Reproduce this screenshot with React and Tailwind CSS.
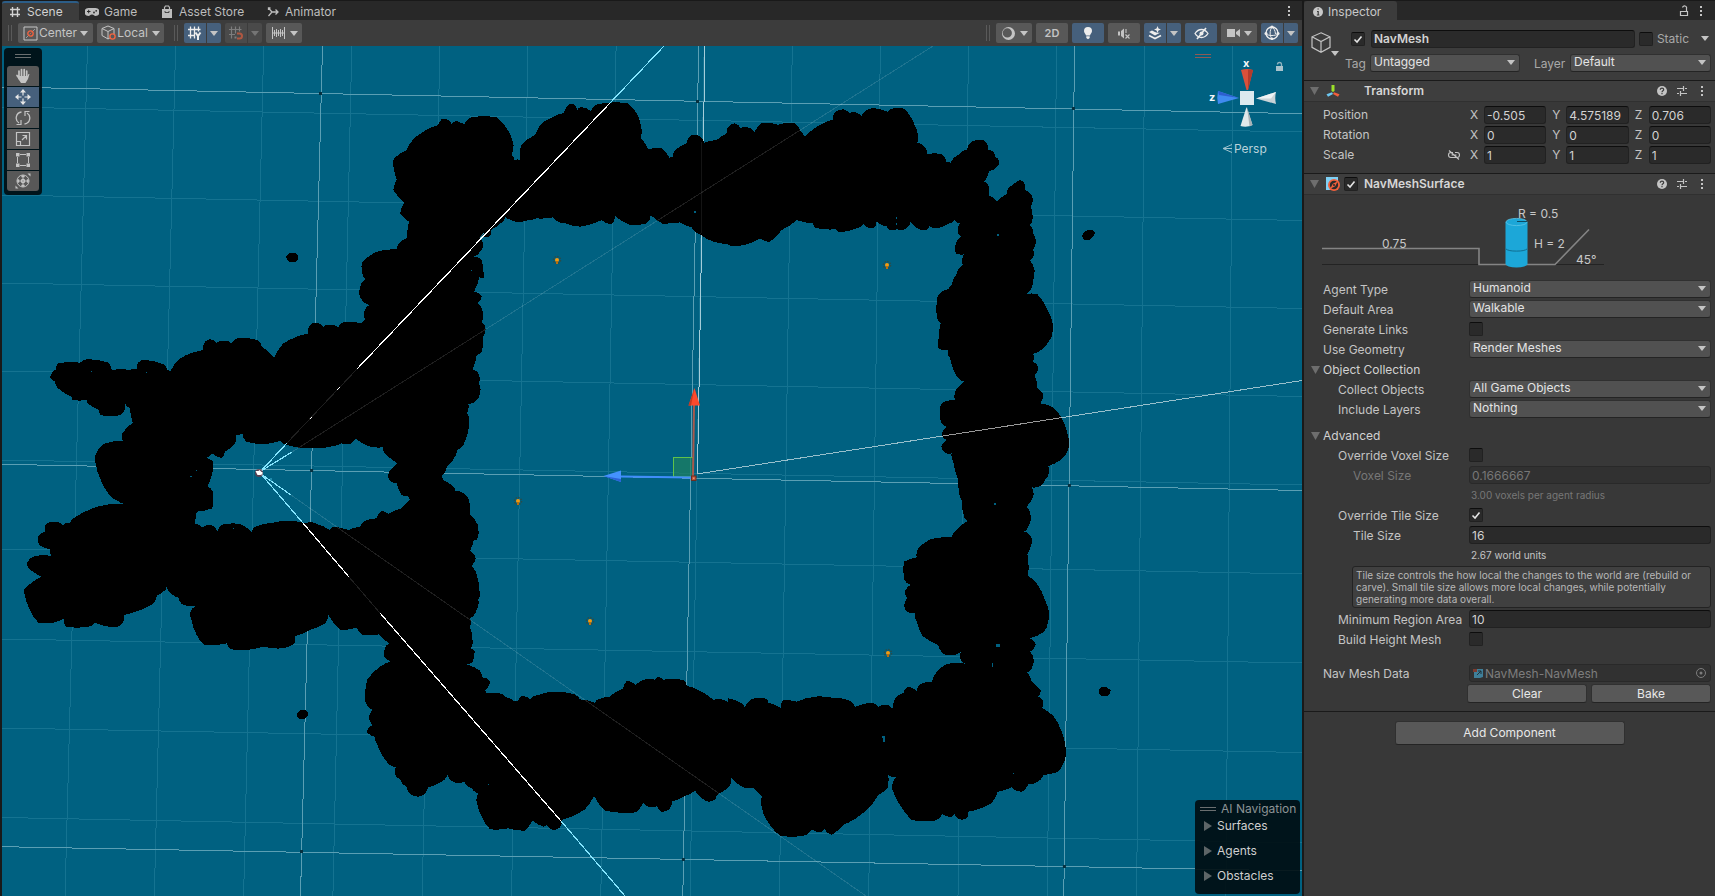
import React from "react";

/* ---------- Terrain outlines ---------- */
/* Each section: origin x, origin y, then points in thirds of a unit from that origin. */

const OUTER = [
  [340, 90, "162,205 200,180 218,150 250,125 295,105 305,88 328,92 335,104 345,94 362,98 372,104 395,82 470,82 500,115 517,150 518,180 514,195 524,210 541,210 543,165 585,135 605,100 672,68 690,42 700,42 712,60 722,52 752,64 775,42 865,40 890,70 904,110 903,145 925,178 965,174 988,203 1000,203 1005,180 1040,160 1055,135 1078,138 1092,158 1130,150 1160,130"],
  [700, 90, "85,110 105,100 122,114 150,114 163,126 185,98 235,104 280,98 300,120 313,140 340,118 400,88 403,70 430,58 448,70 470,68 485,80 500,60 530,56 562,65 590,54 615,58 640,95 655,140 650,160 668,164 682,192 725,192 740,218 752,218 775,195 802,178 810,160 835,150 855,153 865,180 880,185 884,200 898,213 890,232 868,242 853,275 865,285 867,318 890,334 920,312 925,295 960,270 972,278 974,300 997,320 993,350 998,385 990,405 1000,430 1007,460 998,480 1003,495 990,510 1004,540 998,575 988,605 976,612 1012,612 1040,655 1058,700 1055,740 1030,775 1000,792 998,815 1015,830 1004,855 1012,895 1030,915 1020,940 1060,952 1085,985 1105,1040 1105,1080 1085,1108 1045,1128 1045,1155 1035,1170"],
  [700, 480, "1020,18 995,22 1000,50 980,80 992,108 985,140 972,155 990,165 995,190 982,222 984,288 1010,310 1035,360 1048,400 1042,435 1025,460 990,475 1007,492 990,515 1000,535 995,565 980,578 995,605 1022,632 1015,650 1028,662 1027,684 1060,708 1085,755 1097,805 1095,840 1075,875 1030,885 1010,907 985,912 965,935 935,922 893,935 875,970 805,995 800,1015 780,1018 762,1000 757,1010 727,1002 705,1022 635,1020 600,975 580,935 578,910 592,890 565,886 563,925 535,945 500,990 430,1035 395,1065 373,1045 365,1056 335,1048 312,1067 240,1067 210,1035 190,1000 183,960 187,950 160,922 130,922 92,893 88,920 50,945 45,958 28,965"],
  [340, 480, "1090,958 1065,932 1035,948 995,965 990,985 965,995 950,978 935,982 910,970 888,997 795,992 762,948 735,988 665,1020 660,1042 640,1050 620,1035 610,1040 577,1022 555,1052 505,1045 450,1048 425,1010 410,965 415,940 395,925 372,905 345,908 322,885 305,905 265,922 245,948 215,945 200,920 180,898 165,883 168,862 140,845 110,790 105,770 80,755 98,735 87,712 98,690 78,670 76,640 82,598 120,560 155,543 133,530 135,505 147,490 118,463 70,465 50,443 0,450"],
  [0, 300, "985,945 975,970 930,990 885,1008 882,1032 850,1045 790,1040 720,1050 690,1045 680,1030 612,1035 590,1005 573,955 572,935 587,918 550,915 535,892 515,882 500,860 490,875 470,885 458,912 372,945 368,970 340,982 285,968 265,980 198,980 193,955 160,968 115,968 90,930 73,880 75,865 125,830 85,805 83,785 105,768 155,768 150,748 118,735 115,710 135,695 137,675 160,665 188,675 210,668 220,655 300,618 380,612 350,600 325,580 300,535 287,490 288,460 310,432 368,422 367,400 398,368 390,325 376,312 368,340 340,348 302,345 298,330 265,312 260,300 218,300 215,290 178,268 165,245 150,232 168,208 175,190 240,188 270,178 325,188 335,210 390,210 412,208 415,187 440,180 495,195 500,210 510,215 540,175 610,150 615,125 630,118 650,128 670,122 695,130 715,114 772,120 785,140 823,173 850,130 925,100 930,75 950,68 970,80 990,75 1015,82 1030,66 1085,70"],
  [340, 90, "75,690 75,658 88,645 62,625 60,595 75,568 66,540 68,515 110,485 170,478 178,460 202,445 207,395 180,370 193,338 160,300 170,268 162,235"],
];

const ARENA = [
  [340, 90, "495,380 488,395 452,420 450,438 430,440 420,445 430,465 420,485 400,500 425,510 430,545 432,565 418,562 402,605 425,620 413,640 428,665 425,695 436,712 430,740 425,785 410,795 398,838 415,850 417,880 420,910 410,930 385,942 380,970 388,985 383,1030 370,1065 350,1080 345,1100 322,1130 305,1160"],
  [340, 480, "310,0 340,20 345,32 370,40 388,65 390,105 408,125 415,150 410,180 402,178 390,212 407,235 393,258 410,285 418,330 415,360 410,390 390,415 390,440 398,485 392,505 404,512 398,545 380,553 420,572 425,592 450,603 435,632 440,640 480,640 495,650 525,665 535,662 545,648 570,658 595,645 640,635 700,642 720,658 765,668 775,658 808,650 850,625 862,602 885,615 915,598 945,600 955,590 970,600 995,598 1030,600 1040,617 1085,635 1120,660 1150,660 1165,668"],
  [700, 480, "85,655 125,670 135,685 145,665 170,655 200,658 205,668 243,685 250,660 290,665 345,650 395,653 445,660 465,680 515,668 535,680 565,675 577,690 585,655 610,640 625,620 650,635 660,612 695,605 710,575 740,552 780,550 800,553 785,545 782,515 755,525 732,522 715,495 668,468 650,425 645,398 620,395 613,375 622,355 615,335 632,315 613,300 612,245 650,232 655,205 690,178 755,172 765,155 802,123 790,100 785,60 778,30 775,0"],
  [700, 90, "760,1115 755,1090 735,1088 724,1070 740,1050 725,1035 740,1010 722,995 722,945 745,932 765,930 768,900 793,875 768,855 750,805 743,780 715,775 717,740 722,700 712,685 710,640 720,610 745,598 755,585 770,550 788,525 792,493 768,490 768,460 783,440 773,425 780,400 762,390 745,402 712,415 688,408 680,420 648,412 632,392 620,415 590,418 565,418 560,408 530,395 520,415 490,403 475,413 420,427 405,415 385,418 345,413 340,400 290,390 245,420 210,455 180,445 150,460 110,468 80,462 35,453 0,433"],
  [340, 90, "1055,412 1020,397 985,400 970,402 932,375 920,400 870,405 825,378 815,402 785,390 720,410 675,400 655,395 640,382 590,385 555,392 540,395 510,388"],
];

const CORRIDOR = [
  [0, 300, "727,400 708,405 705,430 675,455 665,475 635,460 618,475 640,485 637,520 622,558 638,575 637,625 590,635 583,670 605,683 635,675 652,693 670,673 720,672 755,695 765,680 820,668 870,663 915,670 945,670 990,690 1000,680 1045,690 1080,680 1095,662 1130,655 1145,633 1165,642 1205,625 1230,600 1225,588 1205,585 1190,550 1167,540 1168,515 1193,490 1160,465 1148,442 1110,440 1065,415 1055,430 1025,430 990,440 940,445 860,435 840,423 790,432 740,425"],
];

/* Joins the points with shallow arcs that bulge away from the rock. Long edges stay nearly straight. */
function outline(sections) {
  const pts = sections.flatMap(([ox, oy, list]) =>
    list.split(" ").map((p) => {
      const [x, y] = p.split(",").map(Number);
      return [ox + x / 3, oy + y / 3];
    })
  );
  let d = `M${pts[0][0].toFixed(1)} ${pts[0][1].toFixed(1)}`;
  for (let i = 1; i <= pts.length; i++) {
    const [x0, y0] = pts[i - 1];
    const [x, y] = pts[i % pts.length];
    const chord = Math.hypot(x - x0, y - y0);
    const r = chord * (chord > 11 ? 3 : 1.3);
    d += `A${r.toFixed(1)} ${r.toFixed(1)} 0 0 1 ${x.toFixed(1)} ${y.toFixed(1)}`;
  }
  return d + "Z";
}

const ROCK = outline(OUTER) + outline(ARENA) + outline(CORRIDOR);
const MINOR_V = Array.from({ length: 14 }, (_, i) => [87.5 + 88.1 * i, 65 + 89.3 * i]);
const MINOR_H = [[107, 132], [195, 220.5], [283, 308.5], [371, 396.5], [460, 485], [549, 574], [639, 663], [728, 752.5], [817.5, 843]];
const MAJOR_V = [[322.5, 300.5], [698.7, 682.8], [1074.6, 1063.8]];
const MAJOR_H = [[87, 113.7], [464.3, 490.5], [846.7, 871]];
const NODES = [[320.5, 93.5], [697.5, 101.5], [1073.4, 108.5], [311.6, 470.5], [1069.4, 485.5], [301.5, 851.5], [683.4, 859.5], [1064.4, 866.5]];
const LIGHTS = [[557, 260], [887, 265], [518, 501], [590, 621], [888, 653]];
const SPECKS = [[994, 503, 2, 2], [996, 644, 4, 3], [992, 663, 1, 4], [882, 736, 3, 2], [883, 738, 2, 4], [896, 217, 1, 2], [896, 223, 1, 2], [997, 234, 2, 2], [91, 371, 1, 1], [146, 372, 1, 1], [190, 476, 2, 1], [196, 470, 1, 1], [471, 270, 1, 1], [488, 784, 1, 1], [694, 211, 2, 2], [1013, 773, 1, 1], [233, 528, 1, 1]];

function SceneCanvas() {
  return (
    <svg className="absolute inset-0 h-full w-full" viewBox="2 46 1300 850" preserveAspectRatio="xMidYMid slice" role="img" aria-label="Scene view">
      <rect x="2" y="46" width="1300" height="850" fill="#006181" />
      <g shapeRendering="crispEdges" stroke="#157391" strokeWidth="1">
        {MINOR_V.map(([a, b]) => <line key={a} x1={a} y1="46" x2={b} y2="896" />)}
        {MINOR_H.map(([a, b]) => <line key={a} x1="2" y1={a} x2="1302" y2={b} />)}
      </g>
      <g shapeRendering="crispEdges" stroke="#5a9fb4" strokeWidth="1">
        {MAJOR_V.map(([a, b]) => <line key={a} x1={a} y1="46" x2={b} y2="896" />)}
        {MAJOR_H.map(([a, b]) => <line key={a} x1="2" y1={a} x2="1302" y2={b} />)}
      </g>
      <line x1="705" y1="46" x2="697.5" y2="473" stroke="#a5cdd9" shapeRendering="crispEdges" />
      {NODES.map(([x, y]) => <rect key={x} x={x - 1.5} y={y - 1.5} width="3" height="3" fill="#07303f" />)}

      <path d={ROCK} fill="#000" fillRule="evenodd" shapeRendering="crispEdges" />
      <g fill="#000" shapeRendering="crispEdges">
        <path d="M286 256l3-3h6l3 3v4l-3 2h-5l-3-2z" />
        <path d="M297 714l3-4h5l3 2v3l-3 4h-5l-3-2z" />
        <path d="M1082 236l3-5 4-1h4l2 3-2 4-4 3h-5z" />
        <path d="M1099 690l2-3h5l5 3-1 3-3 3h-5l-3-2z" />
      </g>
      <g fill="#006181" shapeRendering="crispEdges">
        {SPECKS.map(([x, y, w, h]) => <rect key={`${x}-${y}`} x={x} y={y} width={w} height={h} />)}
      </g>

      <g stroke="#fff" strokeOpacity=".12" shapeRendering="crispEdges">
        <line x1="292" y1="452" x2="933" y2="46" />
        <line x1="291" y1="495" x2="866" y2="896" />
        <line x1="287" y1="443" x2="357" y2="369" />
        <line x1="349" y1="577" x2="380" y2="613" />
        <line x1="702" y1="142" x2="701" y2="234" strokeOpacity=".08" />
      </g>
      <line x1="697" y1="474" x2="1302" y2="380.5" stroke="#fff" strokeOpacity=".6" shapeRendering="crispEdges" />
      <g fill="none" shapeRendering="crispEdges" strokeWidth="1.2">
        <path d="M261 471L287 443M261 471L292 452M261 474L303 523M261 474L291 495M610 103L664 46M561 821L625 896" stroke="#86e6ff" />
        <path d="M357 369L610 103M337 390l3-3M310 419l2-2M303 523L349 577M380 613L561 821" stroke="#fff" />
      </g>
      <path d="M480 238l4-5M271 478v3" stroke="#3fb6d6" />
      <circle cx="259" cy="473" r="4" fill="#7a3540" fillOpacity=".7" />
      <path d="M255.500 471h3l1-1 2 2h1v2l-2 1h-3z" fill="#fff" />

      {LIGHTS.map(([x, y]) => (
        <g key={x}>
          <circle cx={x} cy={y} r="3.500" fill="none" stroke="#2c4c48" strokeWidth="1.500" strokeDasharray="1.500 1.200" />
          <circle cx={x} cy={y} r="2" fill="#f59a10" />
          <rect x={x - 1} y={y + 1} width="2" height="3" fill="#b5700f" />
        </g>
      ))}

      <rect x="673.500" y="457.500" width="20" height="19.500" fill="#1e8060" fillOpacity=".7" stroke="#5fc24a" />
      <line x1="694" y1="405" x2="693" y2="477" stroke="#a8594c" strokeWidth="2" />
      <path d="M694.500 388L700 405.500H688.500z" fill="#fb4a2c" />
      <path d="M694.500 388L691 405.500H688.500z" fill="#c33922" />
      <line x1="621" y1="476.500" x2="692" y2="477.500" stroke="#3f8dfb" strokeWidth="2" />
      <path d="M603.500 476L621 470.500V482z" fill="#4492ff" />
      <path d="M603.500 476L621 479V482z" fill="#2b62d8" />
      <rect x="691.500" y="476" width="4.500" height="4.500" fill="#b8573f" stroke="#6d2d20" strokeWidth="1" />
      <rect x="693" y="477.500" width="1.500" height="1.500" fill="#ff8a66" />
    </svg>
  );
}

/* ---------- Icons ---------- */
const Svg = ({ w = 16, h = 16, className = "", children }) => (
  <svg width={w} height={h} viewBox={`0 0 ${w} ${h}`} className={`shrink-0 ${className}`} fill="none" stroke="currentColor" aria-hidden="true">{children}</svg>
);
const Caret = ({ className = "" }) => (
  <svg width="8" height="5" viewBox="0 0 8 5" className={`shrink-0 ${className}`} aria-hidden="true"><path d="M0 0h8L4 5z" fill="currentColor" /></svg>
);
const Dots = () => (
  <Svg w={4} h={14}><path d="M1 2h2v2H1zM1 6h2v2H1zM1 10h2v2H1z" fill="currentColor" stroke="none" /></Svg>
);
const GridIcon = () => <Svg w={12} h={12}><path d="M3.500 1v10M8.500 1v10M1 3.500h10M1 8.500h10" strokeWidth="1.400" /></Svg>;
const GameIcon = () => (
  <Svg w={14} h={10}><path d="M3.500 1h7a3.500 3.500 0 0 1 0 8C9 9 9 7.500 7 7.500S5 9 3.500 9a3.500 3.500 0 0 1 0-8z" fill="currentColor" stroke="none" /><path d="M2 4.500h3.500M3.700 2.800v3.500" stroke="#282828" /><circle cx="9" cy="5.500" r=".9" fill="#282828" stroke="none" /><circle cx="11.200" cy="3.800" r=".9" fill="#282828" stroke="none" /></Svg>
);
const BagIcon = () => (
  <Svg w={12} h={14}><path d="M1 4h10v9H1z" fill="currentColor" stroke="none" /><path d="M3.500 5V2.500L4.500 1h3l1 1.500V5" strokeWidth="1.200" /><path d="M4 6v1.500h4V6" stroke="#282828" strokeWidth=".8" /></Svg>
);
const AnimatorIcon = () => <Svg w={12} h={12}><path d="M1.500 2L5 6 1.500 10M1.500 4V2h2M5 6h5.500M8.500 3.500L11 6 8.500 8.500" strokeWidth="1.300" /></Svg>;

const PivotIcon = () => (
  <Svg w={15} h={15}><path d="M1 1h13v13H1z" /><path d="M3 12l9-9" stroke="#9c9c9c" /><circle cx="7.500" cy="7.500" r="2.700" stroke="#f26340" strokeWidth="1.300" fill="#585858" /><path d="M6.500 8.500l2-2" stroke="#f26340" strokeWidth=".8" /></Svg>
);
const LocalIcon = () => (
  <Svg w={16} h={16}><path d="M7 1l6 2.500v7L7 14l-6-3.500v-7zM1 3.500L7 6.500l6-3M7 6.500V14" /><circle cx="11.500" cy="11.500" r="2.600" stroke="#f26340" strokeWidth="1.400" fill="#585858" /></Svg>
);
const GridYIcon = () => (
  <Svg w={16} h={16}><path d="M3.500 1.500v12M7.500 1.500v12M11.500 1.500v5M1 4.500h12.500M1 10.500h7" strokeWidth="1.300" /><path d="M8.500 7.500l2.500 3.500 2.500-3.500M11 11v4" strokeWidth="2" /></Svg>
);
const SnapIcon = () => (
  <Svg w={16} h={16} className="opacity-60"><path d="M3.500 1.500v12M7.500 1.500v7M11.500 1.500v5M1 4.500h12.500M1 9.500h6" strokeWidth="1.200" /><path d="M9 8.500h2.500a2.500 2.500 0 0 1 0 5H9" stroke="#f2603c" strokeWidth="2" /><path d="M6.500 12.500h2" strokeWidth="2" /></Svg>
);
const RulerIcon = () => <Svg w={15} h={14}><path d="M1.500 1v12M13.500 1v12M1 7h13M3.500 4v6M5.500 3v8M7.500 4v6M9.500 3v8M11.500 4v6" /></Svg>;
const ShadeIcon = () => (
  <Svg w={15} h={15}><path fillRule="evenodd" d="M7.500 1a6.500 6.500 0 1 1 0 13 6.500 6.500 0 0 1 0-13zM6.300 2.300a4.600 4.600 0 1 0 0 9.200 4.600 4.600 0 0 0 0-9.200z" fill="currentColor" stroke="none" /></Svg>
);
const BulbIcon = () => (
  <Svg w={12} h={14}><path d="M6 1a4 4 0 0 1 4 4c0 2-1.500 2.500-2 4.500H4C3.500 7.500 2 7 2 5a4 4 0 0 1 4-4zM4.300 10.200h3.400V12L6 13.200 4.300 12z" fill="currentColor" stroke="none" /></Svg>
);
const MuteIcon = () => (
  <Svg w={14} h={13}><path d="M1 4.500h2v4H1zM4 4l3-2.500v10L4 9z" fill="currentColor" stroke="none" /><path d="M9 2v4M8.500 7.500l4 4M12.500 7.500l-4 4" strokeWidth="1.100" /></Svg>
);
const FxIcon = () => (
  <Svg w={15} h={14}><path d="M1 6l3-1.500 3 1.500 2 .7 3 0L7 9.500z" fill="currentColor" stroke="none" /><path d="M1 9.500l6 3 6-3" strokeWidth="1.800" /><path d="M9.500 0l1 2.500L13 3.500l-2.500 1-1 2.500-1-2.500L6 3.500l2.500-1z" fill="currentColor" stroke="none" /></Svg>
);
const HiddenIcon = () => (
  <Svg w={15} h={13}><path d="M1 6.500C3 3.500 5 2.500 7.500 2.500s4.500 1 6.500 4c-2 3-4 4-6.500 4S3 9.500 1 6.500z" strokeWidth="1.300" /><circle cx="7.500" cy="6.500" r="2" fill="currentColor" stroke="none" /><path d="M12 1L3 12" strokeWidth="1.600" /></Svg>
);
const CameraIcon = () => <Svg w={13} h={10}><path d="M0 1h8v8H0zM9 4l4-3v8L9 6z" fill="currentColor" stroke="none" /></Svg>;
const GizmosIcon = () => (
  <Svg w={16} h={16}><circle cx="8" cy="8" r="6" strokeWidth="1.300" /><path d="M8 2C5.500 5 5.500 11 8 14M2 9c3 2 9 2 12 0M8 2c2 1.500 3 3 3.500 7" /><g fill="currentColor" stroke="none"><circle cx="8" cy="2" r="1.600" /><circle cx="2" cy="8.500" r="1.500" /><circle cx="14" cy="8.500" r="1.500" /><circle cx="8" cy="13.800" r="1.300" /></g></Svg>
);

const HandIcon = () => (
  <Svg w={16} h={16}><path d="M4 3v6M6.500 1.500V9M9.200 1.500V9M11.700 3v7M2 7.500l2.500 3.500" strokeWidth="1.700" strokeLinecap="round" /><path d="M3.500 8h9l1-2h1l-1.500 5-2.500 4H6L3 10.500z" fill="currentColor" stroke="none" /></Svg>
);
const MoveIcon = () => (
  <Svg w={16} h={16}><path d="M8 2v4.500M8 9.500V14M2 8h4.500M9.500 8H14" strokeWidth="1.200" /><path d="M8 0l3 3.500H5zM8 16l3-3.500H5zM0 8l3.500-3v6zM16 8l-3.500-3v6z" fill="currentColor" stroke="none" /></Svg>
);
const RotateIcon = () => (
  <Svg w={16} h={16}><path d="M6.500 2A6 6 0 0 0 4 13M9.500 14A6 6 0 0 0 12 3" strokeWidth="1.300" /><path d="M1.500 14.500H6V10M14.500 1.500H10V6" strokeWidth="1.200" /></Svg>
);
const ScaleIcon = () => (
  <Svg w={16} h={16}><path d="M1.500 1.500h13v13h-13zM1.500 10.500h4v4M7 9l4.500-4.500M7.500 4.500h4v4" strokeWidth="1.200" /></Svg>
);
const RectIcon = () => (
  <Svg w={16} h={16}><path d="M5 2.500h6M5 13.500h6M2.500 5v6M13.500 5v6" /><path d="M1 1h3.500v3.500H1zM11.500 1H15v3.500h-3.500zM1 11.500h3.500V15H1zM11.500 11.500H15V15h-3.500z" fill="currentColor" stroke="none" /></Svg>
);
const TransformToolIcon = () => (
  <Svg w={16} h={16}><circle cx="8" cy="8" r="6" /><path d="M8 2.500v11M2.500 8h11M6.500 4L8 2.500 9.500 4M6.500 12L8 13.500 9.500 12M4 6.500L2.500 8 4 9.500M12 6.500L13.500 8 12 9.500" strokeWidth="1.100" /><path d="M6.500 6.500h3v3h-3z" /><path d="M12.500.5h3v3zM.5 12.500v3h3z" fill="currentColor" stroke="none" /></Svg>
);
const HelpIcon = () => (
  <Svg w={12} h={12}><circle cx="6" cy="6" r="5" fill="currentColor" stroke="none" /><path d="M4.300 4.800C4.300 2.600 7.700 2.700 7.700 4.700 7.700 5.800 6 5.900 6 7.200M6 8v1.200" stroke="#3c3c3c" strokeWidth="1.200" /></Svg>
);
const PresetIcon = () => <Svg w={12} h={12}><path d="M1 3.500h6M9 3.500h2M1 8.500h2M5 8.500h6M7.500 1v5M4.500 6v5" strokeWidth="1.200" /></Svg>;
const LockIcon = () => <Svg w={10} h={12}><path d="M1.500 6.500h7v4h-7zM7.500 6.500v-3a2 2 0 0 0-4-1" strokeWidth="1.200" /></Svg>;
const InfoIcon = () => (
  <Svg w={12} h={12}><circle cx="6" cy="6" r="5" fill="currentColor" stroke="none" /><path d="M5 5.500h1.200V9M4.800 9h2.600M5.500 3h1.300" stroke="#3c3c3c" strokeWidth="1.200" /></Svg>
);

/* ---------- Scene window ---------- */
function Tab({ icon, children, active, width }) {
  return (
    <button type="button" role="tab" aria-selected={!!active} className={`flex h-5 items-center gap-1 pl-[5px] text-left ${width} ${active ? "rounded-t-[3px] border-t-2 border-[#2c5d87] bg-[#3c3c3c] pb-px text-[#d2d2d2]" : "pt-0.5 text-[#bdbdbd]"}`}>
      <span className="flex w-4 justify-center">{icon}</span>
      {children}
    </button>
  );
}
const Grip = () => <span className="h-4 w-1 shrink-0 border-x border-[#5a5a5a]" />;

function ToolButton({ label, width, on, dim, split, children }) {
  const bg = on ? "bg-[#46607c] text-[#ededed]" : dim ? "bg-[#4a4a4a] text-[#a0a0a0]" : "bg-[#585858] text-[#c4c4c4]";
  if (split)
    return (
      <div className="flex gap-px">
        <button type="button" aria-label={label} className={`flex h-5 w-[22px] items-center justify-center rounded-l-[2px] ${bg}`}>{children}</button>
        <button type="button" aria-label={`${label} options`} className={`flex h-5 w-3.5 items-center justify-center rounded-r-[2px] ${bg}`}><Caret className={dim ? "opacity-50" : "text-[#c4c4c4]"} /></button>
      </div>
    );
  return <button type="button" aria-label={label} className={`flex h-5 items-center justify-center rounded-[2px] ${width} ${bg}`}>{children}</button>;
}

function SceneToolbar() {
  return (
    <div className="flex h-[26px] shrink-0 items-center gap-1 bg-[#3c3c3c] px-1.5 pr-1">
      <Grip />
      <div className="flex w-[248px] grow items-center gap-1 pl-0.5">
        <ToolButton label="Center" width="w-[75px] gap-px"><PivotIcon /><span>Center</span><Caret className="ml-0.5" /></ToolButton>
        <ToolButton label="Local" width="w-[67px]"><LocalIcon /><span>Local</span><Caret className="ml-1" /></ToolButton>
        <span className="ml-1.5 mr-0.5 flex"><Grip /></span>
        <ToolButton label="Grid visibility" split on><GridYIcon /></ToolButton>
        <ToolButton label="Grid snapping" split dim><SnapIcon /></ToolButton>
        <ToolButton label="Snap increment" width="w-9 gap-1"><RulerIcon /><Caret /></ToolButton>
      </div>
      <span className="mr-0.5 flex"><Grip /></span>
      <ToolButton label="Draw mode" width="w-9 gap-1"><ShadeIcon /><Caret /></ToolButton>
      <ToolButton label="2D" width="w-8"><span className="text-[11px] font-semibold">2D</span></ToolButton>
      <ToolButton label="Lighting" width="w-8" on><BulbIcon /></ToolButton>
      <ToolButton label="Audio" width="w-8"><MuteIcon /></ToolButton>
      <ToolButton label="Effects" split on><FxIcon /></ToolButton>
      <ToolButton label="Scene visibility" width="w-8" on><HiddenIcon /></ToolButton>
      <ToolButton label="Camera" width="w-9 gap-1"><CameraIcon /><Caret /></ToolButton>
      <ToolButton label="Gizmos" split on><GizmosIcon /></ToolButton>
    </div>
  );
}

const TOOLS = [["Hand", HandIcon], ["Move", MoveIcon], ["Rotate", RotateIcon], ["Scale", ScaleIcon], ["Rect", RectIcon], ["Transform", TransformToolIcon]];

function ToolPalette() {
  return (
    <div className="absolute left-0.5 top-0.5 flex w-[38px] flex-col items-center rounded-[4px] bg-[#000c10]/90 pb-1">
      <span className="my-1.5 h-1 w-4 border-y border-[#6a6f70]" />
      <div className="mt-0.5 flex flex-col gap-px overflow-hidden rounded-[3px]">
        {TOOLS.map(([name, Icon]) => (
          <button key={name} type="button" aria-label={`${name} tool`} className={`flex h-5 w-8 items-center justify-center ${name === "Move" ? "bg-[#46607c] text-[#e6e6e6]" : "bg-[#585858] text-[#c4c4c4]"}`}><Icon /></button>
        ))}
      </div>
    </div>
  );
}

function Orientation() {
  return (
    <svg className="absolute right-4 top-1.5 h-[110px] w-[96px]" viewBox="1190 52 96 110" fontFamily="Inter, sans-serif" aria-label="Orientation">
      <path d="M1195 54.500h16M1195 57.500h16" stroke="#8d5a55" />
      <g fill="#f4f8fa" fontSize="11" fontWeight="700"><text x="1243" y="67">x</text><text x="1209" y="101">z</text></g>
      <path d="M1241 70q6-2 12 0l-5 20h-1.500z" fill="#d9503a" /><path d="M1248 69.500l5 .5-5 20z" fill="#b33b2c" />
      <path d="M1218 91l21 7-21 6q-1.500-6 0-13z" fill="#3f8bf0" /><path d="M1218 91l21 7-20-3z" fill="#2d5fd0" />
      <path d="M1276 92l-20 6.500 20 5.500q-1.500-6 0-12z" fill="#c9d3d7" /><path d="M1276 92l-20 6.500 15 0z" fill="#eef3f5" />
      <path d="M1246.500 107l6 18q-6 3-12 1z" fill="#e0e8ea" /><path d="M1247 107l5.500 18-3 1.500z" fill="#a9b3b7" />
      <path d="M1240 91h14v14h-14z" fill="#dce9ee" />
      <path d="M1276 66h7v5h-7z" fill="#a9c3cc" /><path d="M1281.500 66v-1.500a2 2 0 0 0-4 0" fill="none" stroke="#8fb3bf" strokeWidth="1.300" />
      <path d="M1232 144.500l-9 4 9 4M1223 148.500h9" fill="none" stroke="#9fc3cf" />
      <text x="1234" y="153" fontSize="12" fill="#b9d2da">Persp</text>
    </svg>
  );
}

function NavigationOverlay() {
  return (
    <section className="absolute bottom-0.5 right-0.5 w-[105px] rounded-[4px] bg-[#000c10]/90 pb-[9px] text-[#cfcfcf]">
      <h2 className="flex h-[17px] items-center gap-[5px] pl-[5px] text-[12px] font-normal text-[#8c9395]"><span className="h-1 w-4 shrink-0 border-y border-[#6a6f70]" /><span className="whitespace-nowrap">AI Navigation</span></h2>
      <div className="flex flex-col gap-[7px]">
        {["Surfaces", "Agents", "Obstacles"].map((t) => (
          <button key={t} type="button" className="flex h-[18px] items-center gap-[5px] pl-[9px] leading-[18px]">
            <svg width="8" height="10" viewBox="0 0 8 10" aria-hidden="true"><path d="M0 0l8 5-8 5z" fill="#5d6567" /></svg>{t}
          </button>
        ))}
      </div>
    </section>
  );
}

/* ---------- Inspector ---------- */
const inputStyle = "h-[18px] w-full min-w-0 rounded-[3px] border border-[#212121] border-t-[#0d0d0d] bg-[#2a2a2a] px-0.5 text-[#d2d2d2] outline-none";

function Select({ id, value, label }) {
  return (
    <div className="relative flex w-full min-w-0">
      <select id={id} aria-label={label} defaultValue={value} className="h-[18px] w-full appearance-none rounded-[3px] border border-[#303030] border-b-[#242424] bg-[#515151] pb-0.5 pl-[3px] leading-[14px] text-[#e4e4e4] outline-none"><option>{value}</option></select>
      <Caret className="pointer-events-none absolute right-[5px] top-1.5 text-[#c4c4c4]" />
    </div>
  );
}
function Check({ id, checked, label }) {
  return (
    <span className="relative flex h-3.5 w-3.5 shrink-0">
      <input id={id} aria-label={label} type="checkbox" defaultChecked={checked} className="peer h-3.5 w-3.5 appearance-none rounded-[2px] border border-[#212121] border-t-[#0d0d0d] bg-[#2a2a2a]" />
      <svg className="pointer-events-none absolute inset-0 hidden peer-checked:block" width="14" height="14" viewBox="0 0 14 14" fill="none" aria-hidden="true"><path d="M3.500 7.500L6 10l4.500-5.500" stroke="#e4e4e4" strokeWidth="1.600" /></svg>
    </span>
  );
}
function Row({ id, label, pad = "pl-[19px]", dim, children }) {
  return (
    <div className="flex h-5 items-center pr-1">
      <label htmlFor={id} className={`w-[165px] shrink-0 whitespace-nowrap pt-0.5 ${pad} ${dim ? "text-[#777]" : "text-[#c4c4c4]"}`}>{label}</label>
      <div className="flex min-w-0 flex-1 items-center">{children}</div>
    </div>
  );
}
const Fold = () => <svg width="9" height="8" viewBox="0 0 9 8" className="shrink-0" aria-hidden="true"><path d="M0 0h9L4.500 8z" fill="#6e6e6e" /></svg>;
function FoldRow({ children }) {
  return <button type="button" className="flex h-5 w-full items-center gap-[3px] pl-[7px] pt-0.5 text-left text-[#d2d2d2]"><Fold />{children}</button>;
}
function ComponentHeader({ icon, title, children }) {
  return (
    <header className="flex h-[21px] items-center border-b border-[#303030] bg-[#3e3e3e] pl-1.5 pr-[11px]">
      <button type="button" aria-label={`Collapse ${title}`} className="flex w-4 items-center"><Fold /></button>
      <span className="flex w-[18px] items-center">{icon}</span>
      <span className="flex w-5">{children}</span>
      <h2 className="flex-1 font-semibold text-[#d6d6d6]">{title}</h2>
      <div className="flex items-center gap-2 text-[#c4c4c4]">
        <button type="button" aria-label="Help"><HelpIcon /></button>
        <button type="button" aria-label="Presets"><PresetIcon /></button>
        <button type="button" aria-label="More" className="ml-1"><Dots /></button>
      </div>
    </header>
  );
}
function VectorRow({ name, values, unlink }) {
  return (
    <div className="flex h-5 items-center pr-1">
      <span className="flex w-[165px] shrink-0 items-center justify-between pl-[19px] pr-2 text-[#c4c4c4]">
        {name}
        {unlink && <Svg w={14} h={10}><path d="M6 2.500H4a2.500 2.500 0 0 0 0 5h6a2.500 2.500 0 0 0 0-5H8M4.500 5h5M2 .5l10 9" strokeWidth="1.100" /></Svg>}
      </span>
      <div className="grid flex-1 grid-cols-3 gap-x-[5px]">
        {["X", "Y", "Z"].map((a, i) => (
          <label key={a} className="flex items-center text-[#c4c4c4]"><span className="w-[15px] shrink-0 pl-px">{a}</span><input aria-label={`${name} ${a}`} defaultValue={values[i]} className={inputStyle} /></label>
        ))}
      </div>
    </div>
  );
}

const TransformIcon = () => (
  <svg width="14" height="14" viewBox="0 0 14 14" aria-hidden="true"><path d="M5.500 1h3v6L7 8 5.500 7z" fill="#9be02a" /><path d="M6 8.200L7 10l-5 2.800-1.500-2.500z" fill="#6cc8f2" /><path d="M8 8.200L7 10l5 2.800 1.500-2.500z" fill="#f2603c" /></svg>
);
const SurfaceIcon = () => (
  <svg width="14" height="14" viewBox="0 0 14 14" aria-hidden="true"><path d="M0 0h12v13H0z" fill="#7fd0f5" /><circle cx="8" cy="8" r="6" fill="#f2603c" /><circle cx="8" cy="8" r="4.200" fill="#2b2b2b" /><path d="M11.800 4.200L9.200 9.200 4.200 11.800 6.800 6.800z" fill="#f2603c" /><circle cx="8" cy="8" r="1" fill="#2b2b2b" /></svg>
);

function AgentDiagram() {
  return (
    <svg width="411" height="84" viewBox="0 1 411 84" fill="none" className="block" fontFamily="Inter, sans-serif" role="img" aria-label="Agent dimensions">
      <path d="M18 70.500h282" stroke="#232323" />
      <path d="M18 54.500h157v16h76l34-35" stroke="#848484" strokeWidth="1.600" />
      <path d="M201.500 28v42a11 3.500 0 0 0 22 0V28z" fill="#1ca7d8" />
      <ellipse cx="212.500" cy="28" rx="10.500" ry="3.600" fill="#1ca7d8" stroke="#5cc4e6" strokeWidth=".8" />
      <path d="M202 55a11 3 0 0 0 21 0" stroke="#116d90" />
      <path d="M213 27.500h10" stroke="#0d4a63" />
      <g fill="#c8c8c8" fontSize="12"><text x="214" y="24">R = 0.5</text><text x="230" y="54">H = 2</text><text x="78" y="54">0.75</text><text x="272" y="70">45°</text></g>
    </svg>
  );
}

const buttonStyle = "rounded-[3px] border border-[#303030] border-b-[#242424] bg-[#585858] text-center text-[#e8e8e8]";

function Inspector() {
  return (
    <aside className="flex w-[411px] shrink-0 flex-col bg-[#383838]">
      <div className="flex h-5 items-center justify-between border-t border-[#191919] bg-[#282828] pr-3">
        <button type="button" role="tab" aria-selected="true" className="flex h-full w-[93px] items-center gap-1 rounded-t-[3px] bg-[#3c3c3c] pl-2 pt-0.5 text-[#c9c9c9]"><InfoIcon />Inspector</button>
        <div className="flex items-center gap-2.5 text-[#c4c4c4]"><button type="button" aria-label="Lock"><LockIcon /></button><button type="button" aria-label="More"><Dots /></button></div>
      </div>

      <div className="flex h-[60px] gap-3 bg-[#3c3c3c] pl-[7px] pr-1 pt-[9px]">
        <button type="button" aria-label="Object icon" className="relative mt-px h-6 w-7 text-[#c4c4c4]">
          <Svg w={20} h={21}><path d="M10 .8l9 4v10.500l-9 5-9-5V4.800zM1 4.800l9 4.700 9-4.700M10 9.500v10.800" strokeWidth="1.200" /></Svg>
          <Caret className="absolute bottom-0 right-0 translate-y-0.5" />
        </button>
        <div className="flex min-w-0 flex-1 flex-col gap-1.5">
          <div className="flex h-[19px] items-center">
            <Check checked label="Active" />
            <input aria-label="Name" defaultValue="NavMesh" className={`${inputStyle} ml-1.5 flex-1 font-semibold`} />
            <span className="ml-1 flex"><Check id="static" /></span>
            <label htmlFor="static" className="ml-1 text-[#a8a8a8]">Static</label>
            <Caret className="ml-3 mr-0.5 text-[#c4c4c4]" />
          </div>
          <div className="flex items-center text-[#a8a8a8]">
            <label htmlFor="tag" className="-ml-1.5 w-[25px] shrink-0 pt-0.5">Tag</label>
            <div className="w-[150px]"><Select id="tag" value="Untagged" /></div>
            <label htmlFor="layer" className="ml-3.5 w-9 shrink-0 pt-0.5">Layer</label>
            <div className="min-w-0 flex-1"><Select id="layer" value="Default" /></div>
          </div>
        </div>
      </div>

      <section className="border-t border-[#1a1a1a] pb-2">
        <ComponentHeader title="Transform" icon={<TransformIcon />} />
        <div className="pt-[3px]">
          <VectorRow name="Position" values={["-0.505", "4.575189", "0.706"]} />
          <VectorRow name="Rotation" values={["0", "0", "0"]} />
          <VectorRow name="Scale" values={["1", "1", "1"]} unlink />
        </div>
      </section>

      <section className="border-b border-t border-[#1a1a1a] pb-2">
        <ComponentHeader title="NavMeshSurface" icon={<SurfaceIcon />}><Check checked label="Enable NavMeshSurface" /></ComponentHeader>
        <AgentDiagram />
        <Row id="agent" label="Agent Type"><Select id="agent" value="Humanoid" /></Row>
        <Row id="area" label="Default Area"><Select id="area" value="Walkable" /></Row>
        <Row id="links" label="Generate Links"><Check id="links" /></Row>
        <Row id="geometry" label="Use Geometry"><Select id="geometry" value="Render Meshes" /></Row>
        <FoldRow>Object Collection</FoldRow>
        <Row id="collect" label="Collect Objects" pad="pl-[34px]"><Select id="collect" value="All Game Objects" /></Row>
        <Row id="layers" label="Include Layers" pad="pl-[34px]"><Select id="layers" value="Nothing" /></Row>
        <div className="pt-1.5"><FoldRow>Advanced</FoldRow></div>
        <Row id="ovoxel" label="Override Voxel Size" pad="pl-[34px]"><Check id="ovoxel" /></Row>
        <Row id="voxel" label="Voxel Size" pad="pl-[49px]" dim><input id="voxel" disabled defaultValue="0.1666667" className="h-[18px] w-full min-w-0 rounded-[3px] border border-[#292929] bg-[#313131] px-0.5 text-[#777]" /></Row>
        <p className="h-5 pl-[167px] text-[10px] leading-5 text-[#777]">3.00 voxels per agent radius</p>
        <Row id="otile" label="Override Tile Size" pad="pl-[34px]"><Check id="otile" checked /></Row>
        <Row id="tile" label="Tile Size" pad="pl-[49px]"><input id="tile" defaultValue="16" className={inputStyle} /></Row>
        <p className="h-5 pl-[167px] text-[10px] leading-5 text-[#c4c4c4]">2.67 world units</p>
        <p className="ml-12 mr-1 mt-px rounded-[3px] border border-[#232323] bg-[#404040] py-0.5 pl-[3px] text-[10px] leading-3 text-[#b8b8b8]">Tile size controls the how local the changes to the world are (rebuild or carve). Small tile size allows more local changes, while potentially generating more data overall.</p>
        <div className="pt-px"><Row id="region" label="Minimum Region Area" pad="pl-[34px]"><input id="region" defaultValue="10" className={inputStyle} /></Row></div>
        <Row id="height" label="Build Height Mesh" pad="pl-[34px]"><Check id="height" /></Row>
        <div className="pt-3.5">
          <Row id="data" label="Nav Mesh Data">
            <div className="relative flex w-full items-center text-[#7d7d7d]">
              <svg className="absolute left-1 top-1" width="10" height="10" viewBox="0 0 10 10" aria-hidden="true"><path d="M2 1h8v8l-3 1H1V4z" fill="#3f7f99" /><path d="M0 1h4v3H0z" fill="#7a3b30" /><path d="M4 7l4-4M5 3h3v3" stroke="#20323a" fill="none" /></svg>
              <input id="data" readOnly defaultValue="NavMesh-NavMesh" className="h-[18px] w-full rounded-[3px] border border-[#292929] bg-[#313131] pl-[15px] outline-none" />
              <button type="button" aria-label="Pick object" className="absolute right-1"><Svg w={12} h={12}><circle cx="6" cy="6" r="4.500" /><circle cx="6" cy="6" r="1.500" fill="currentColor" stroke="none" /></Svg></button>
            </div>
          </Row>
        </div>
        <div className="mt-px grid grid-cols-2 gap-1 pl-[163px] pr-1">
          <button type="button" className={`${buttonStyle} h-[19px] leading-[17px]`}>Clear</button>
          <button type="button" className={`${buttonStyle} h-[19px] leading-[17px]`}>Bake</button>
        </div>
      </section>
      <div className="flex justify-center pt-[9px]">
        <button type="button" className={`${buttonStyle} h-6 w-[230px]`}>Add Component</button>
      </div>
    </aside>
  );
}

export default function App() {
  return (
    <div className="flex h-screen w-full overflow-hidden bg-[#191919] font-['Inter',sans-serif] text-[12px] leading-4">
      <main className="ml-0.5 mr-0.5 flex min-w-0 flex-1 flex-col">
        <div className="flex h-5 shrink-0 items-center justify-between border-t border-[#191919] bg-[#282828] pr-[11px]">
          <div role="tablist" className="flex h-full">
            <Tab active width="w-[77px]" icon={<GridIcon />}>Scene</Tab>
            <Tab width="w-[75px]" icon={<GameIcon />}>Game</Tab>
            <Tab width="w-[106px]" icon={<BagIcon />}>Asset Store</Tab>
            <Tab width="w-[90px]" icon={<AnimatorIcon />}>Animator</Tab>
          </div>
          <button type="button" aria-label="More" className="text-[#c4c4c4]"><Dots /></button>
        </div>
        <SceneToolbar />
        <div className="relative min-h-0 flex-1 overflow-hidden bg-[#006181]">
          <SceneCanvas />
          <ToolPalette />
          <Orientation />
          <NavigationOverlay />
        </div>
      </main>
      <Inspector />
    </div>
  );
}
